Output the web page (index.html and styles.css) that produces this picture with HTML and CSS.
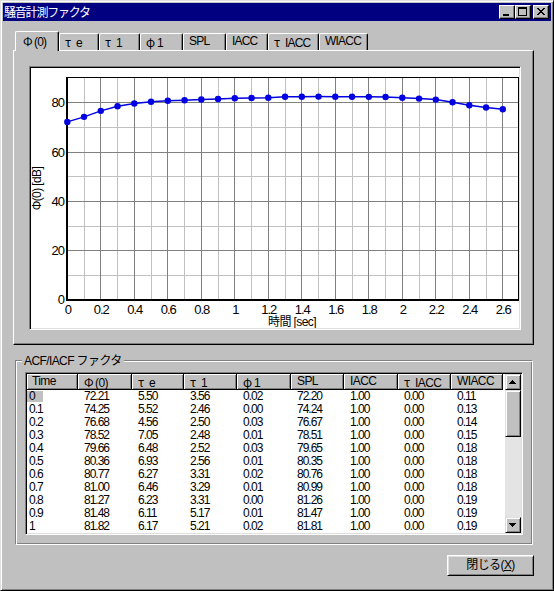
FILE: index.html
```html
<!DOCTYPE html>
<html lang="ja">
<head>
<meta charset="utf-8">
<title>騒音計測ファクタ</title>
<link rel="stylesheet" href="styles.css">
</head>
<body>
<div class="window">
  <div class="titlebar">
    <span class="title">騒音計測ファクタ</span>
    <div class="tb-buttons">
      <div class="tb-btn"><svg width="14" height="12" viewBox="0 0 14 12"><rect x="3" y="8" width="6" height="2" fill="#000"/></svg></div>
      <div class="tb-btn"><svg width="14" height="12" viewBox="0 0 14 12"><rect x="2.5" y="1.5" width="8" height="8" fill="none" stroke="#000"/><rect x="2" y="1" width="9" height="2" fill="#000"/></svg></div>
      <div class="tb-btn tb-close"><svg width="14" height="12" viewBox="0 0 14 12" shape-rendering="crispEdges"><path d="M3 2h2v1h-2zM9 2h2v1h-2zM4 3h2v1h-2zM8 3h2v1h-2zM5 4h4v1h-4zM6 5h2v1h-2zM5 6h4v1h-4zM4 7h2v1h-2zM8 7h2v1h-2zM3 8h2v1h-2zM9 8h2v1h-2z" fill="#000"/></svg></div>
    </div>
  </div>
  <div class="content">
    <div class="tabs">
      <div class="tab active t1"><span class="g">Φ</span>(0)</div>
      <div class="tab t2"><span class="g">τ</span>e</div>
      <div class="tab t3"><span class="g">τ</span>1</div>
      <div class="tab t4"><span class="g">φ</span>1</div>
      <div class="tab t5">SPL</div>
      <div class="tab t6">IACC</div>
      <div class="tab t7"><span class="g">τ</span>IACC</div>
      <div class="tab t8">WIACC</div>
    </div>
    <div class="panel">
      <div class="chart">
        <svg class="plot" width="488" height="260" viewBox="31 68 488 260">
          <rect x="31" y="68" width="488" height="260" fill="#fff"/>
          <g class="grid-minor" stroke="#c0c0c0" stroke-width="1">
            <line x1="84.5" y1="78" x2="84.5" y2="300"/>
            <line x1="117.5" y1="78" x2="117.5" y2="300"/>
            <line x1="151.5" y1="78" x2="151.5" y2="300"/>
            <line x1="184.5" y1="78" x2="184.5" y2="300"/>
            <line x1="218.5" y1="78" x2="218.5" y2="300"/>
            <line x1="251.5" y1="78" x2="251.5" y2="300"/>
            <line x1="285.5" y1="78" x2="285.5" y2="300"/>
            <line x1="318.5" y1="78" x2="318.5" y2="300"/>
            <line x1="352.5" y1="78" x2="352.5" y2="300"/>
            <line x1="385.5" y1="78" x2="385.5" y2="300"/>
            <line x1="419.5" y1="78" x2="419.5" y2="300"/>
            <line x1="452.5" y1="78" x2="452.5" y2="300"/>
            <line x1="486.5" y1="78" x2="486.5" y2="300"/>
            <line x1="67" y1="275.5" x2="518" y2="275.5"/>
            <line x1="67" y1="226.5" x2="518" y2="226.5"/>
            <line x1="67" y1="176.5" x2="518" y2="176.5"/>
            <line x1="67" y1="127.5" x2="518" y2="127.5"/>
          </g>
          <g class="grid-major" stroke="#808080" stroke-width="1">
            <line x1="100.5" y1="78" x2="100.5" y2="300"/>
            <line x1="134.5" y1="78" x2="134.5" y2="300"/>
            <line x1="167.5" y1="78" x2="167.5" y2="300"/>
            <line x1="201.5" y1="78" x2="201.5" y2="300"/>
            <line x1="234.5" y1="78" x2="234.5" y2="300"/>
            <line x1="268.5" y1="78" x2="268.5" y2="300"/>
            <line x1="301.5" y1="78" x2="301.5" y2="300"/>
            <line x1="335.5" y1="78" x2="335.5" y2="300"/>
            <line x1="368.5" y1="78" x2="368.5" y2="300"/>
            <line x1="402.5" y1="78" x2="402.5" y2="300"/>
            <line x1="435.5" y1="78" x2="435.5" y2="300"/>
            <line x1="469.5" y1="78" x2="469.5" y2="300"/>
            <line x1="502.5" y1="78" x2="502.5" y2="300"/>
            <line x1="67" y1="250.5" x2="518" y2="250.5"/>
            <line x1="67" y1="201.5" x2="518" y2="201.5"/>
            <line x1="67" y1="152.5" x2="518" y2="152.5"/>
            <line x1="67" y1="102.5" x2="518" y2="102.5"/>
          </g>
          <g stroke="#000">
            <line x1="66" y1="77.5" x2="518.5" y2="77.5" stroke-width="1"/>
            <line x1="518.5" y1="77" x2="518.5" y2="301" stroke-width="1"/>
            <line x1="67" y1="77" x2="67" y2="301" stroke-width="2"/>
            <line x1="66" y1="300" x2="519" y2="300" stroke-width="2"/>
          </g>
          <g class="ytick">
            <text x="64" y="107">80</text>
            <text x="64" y="157">60</text>
            <text x="64" y="206">40</text>
            <text x="64" y="255">20</text>
            <text x="64" y="304">0</text>
          </g>
          <g class="xtick">
            <text x="67.8" y="313.5">0</text>
            <text x="101.3" y="313.5">0.2</text>
            <text x="134.8" y="313.5">0.4</text>
            <text x="168.3" y="313.5">0.6</text>
            <text x="201.8" y="313.5">0.8</text>
            <text x="235.3" y="313.5">1</text>
            <text x="268.8" y="313.5">1.2</text>
            <text x="302.3" y="313.5">1.4</text>
            <text x="335.8" y="313.5">1.6</text>
            <text x="369.3" y="313.5">1.8</text>
            <text x="402.8" y="313.5">2</text>
            <text x="436.3" y="313.5">2.2</text>
            <text x="469.8" y="313.5">2.4</text>
            <text x="503.3" y="313.5">2.6</text>
          </g>
          <text class="axis-title" x="292" y="325.5" text-anchor="middle">時間 [sec]</text>
          <text class="axis-title" transform="translate(41 188.5) rotate(-90)" text-anchor="middle">Φ(0) [dB]</text>
          <polyline class="series" fill="none" stroke="#0000e0" stroke-width="1.5" points="67.3,121.9 84.05,116.85 100.8,110.85 117.55,106.32 134.3,103.5 151.05,101.78 167.8,100.77 184.55,100.2 201.3,99.53 218.05,99.02 234.8,98.18 251.55,97.98 268.3,97.73 285.05,96.74 301.8,96.74 318.55,96.62 335.3,96.74 352.05,96.74 368.8,96.87 385.55,97.0 402.3,97.7 419.05,98.6 435.8,99.6 452.55,102.3 469.3,105.3 486.05,107.5 502.8,109.2"/>
          <g class="pts" fill="#0000e0">
            <circle cx="67.3" cy="121.9" r="3.2"/>
            <circle cx="84.05" cy="116.85" r="3.2"/>
            <circle cx="100.8" cy="110.85" r="3.2"/>
            <circle cx="117.55" cy="106.32" r="3.2"/>
            <circle cx="134.3" cy="103.5" r="3.2"/>
            <circle cx="151.05" cy="101.78" r="3.2"/>
            <circle cx="167.8" cy="100.77" r="3.2"/>
            <circle cx="184.55" cy="100.2" r="3.2"/>
            <circle cx="201.3" cy="99.53" r="3.2"/>
            <circle cx="218.05" cy="99.02" r="3.2"/>
            <circle cx="234.8" cy="98.18" r="3.2"/>
            <circle cx="251.55" cy="97.98" r="3.2"/>
            <circle cx="268.3" cy="97.73" r="3.2"/>
            <circle cx="285.05" cy="96.74" r="3.2"/>
            <circle cx="301.8" cy="96.74" r="3.2"/>
            <circle cx="318.55" cy="96.62" r="3.2"/>
            <circle cx="335.3" cy="96.74" r="3.2"/>
            <circle cx="352.05" cy="96.74" r="3.2"/>
            <circle cx="368.8" cy="96.87" r="3.2"/>
            <circle cx="385.55" cy="97.0" r="3.2"/>
            <circle cx="402.3" cy="97.7" r="3.2"/>
            <circle cx="419.05" cy="98.6" r="3.2"/>
            <circle cx="435.8" cy="99.6" r="3.2"/>
            <circle cx="452.55" cy="102.3" r="3.2"/>
            <circle cx="469.3" cy="105.3" r="3.2"/>
            <circle cx="486.05" cy="107.5" r="3.2"/>
            <circle cx="502.8" cy="109.2" r="3.2"/>
          </g>
        </svg>
      </div>
    </div>
    <div class="group">
      <span class="group-label">ACF/IACF ファクタ</span>
      <div class="listview">
        <div class="lv-main">
          <div class="lv-head">
            <div class="hc first">Time</div>
            <div class="hc"><span class="g">Φ</span>(0)</div>
            <div class="hc"><span class="g">τ</span>e</div>
            <div class="hc"><span class="g">τ</span>1</div>
            <div class="hc"><span class="g">φ</span>1</div>
            <div class="hc">SPL</div>
            <div class="hc">IACC</div>
            <div class="hc"><span class="g">τ</span>IACC</div>
            <div class="hc">WIACC</div>
          </div>
          <div class="lv-body">
            <div class="lv-row"><div class="c first"><span class="sel">0</span></div><div class="c">72.21</div><div class="c">5.50</div><div class="c">3.56</div><div class="c">0.02</div><div class="c">72.20</div><div class="c">1.00</div><div class="c">0.00</div><div class="c">0.11</div></div>
            <div class="lv-row"><div class="c first">0.1</div><div class="c">74.25</div><div class="c">5.52</div><div class="c">2.46</div><div class="c">0.00</div><div class="c">74.24</div><div class="c">1.00</div><div class="c">0.00</div><div class="c">0.13</div></div>
            <div class="lv-row"><div class="c first">0.2</div><div class="c">76.68</div><div class="c">4.56</div><div class="c">2.50</div><div class="c">0.03</div><div class="c">76.67</div><div class="c">1.00</div><div class="c">0.00</div><div class="c">0.14</div></div>
            <div class="lv-row"><div class="c first">0.3</div><div class="c">78.52</div><div class="c">7.05</div><div class="c">2.48</div><div class="c">0.01</div><div class="c">78.51</div><div class="c">1.00</div><div class="c">0.00</div><div class="c">0.15</div></div>
            <div class="lv-row"><div class="c first">0.4</div><div class="c">79.66</div><div class="c">6.48</div><div class="c">2.52</div><div class="c">0.03</div><div class="c">79.65</div><div class="c">1.00</div><div class="c">0.00</div><div class="c">0.18</div></div>
            <div class="lv-row"><div class="c first">0.5</div><div class="c">80.36</div><div class="c">6.93</div><div class="c">2.56</div><div class="c">0.01</div><div class="c">80.35</div><div class="c">1.00</div><div class="c">0.00</div><div class="c">0.18</div></div>
            <div class="lv-row"><div class="c first">0.6</div><div class="c">80.77</div><div class="c">6.27</div><div class="c">3.31</div><div class="c">0.02</div><div class="c">80.76</div><div class="c">1.00</div><div class="c">0.00</div><div class="c">0.18</div></div>
            <div class="lv-row"><div class="c first">0.7</div><div class="c">81.00</div><div class="c">6.46</div><div class="c">3.29</div><div class="c">0.01</div><div class="c">80.99</div><div class="c">1.00</div><div class="c">0.00</div><div class="c">0.18</div></div>
            <div class="lv-row"><div class="c first">0.8</div><div class="c">81.27</div><div class="c">6.23</div><div class="c">3.31</div><div class="c">0.00</div><div class="c">81.26</div><div class="c">1.00</div><div class="c">0.00</div><div class="c">0.19</div></div>
            <div class="lv-row"><div class="c first">0.9</div><div class="c">81.48</div><div class="c">6.11</div><div class="c">5.17</div><div class="c">0.01</div><div class="c">81.47</div><div class="c">1.00</div><div class="c">0.00</div><div class="c">0.19</div></div>
            <div class="lv-row"><div class="c first">1</div><div class="c">81.82</div><div class="c">6.17</div><div class="c">5.21</div><div class="c">0.02</div><div class="c">81.81</div><div class="c">1.00</div><div class="c">0.00</div><div class="c">0.19</div></div>
          </div>
        </div>
        <div class="scrollbar">
          <div class="sb-btn"><svg width="14" height="14" viewBox="0 0 14 14" shape-rendering="crispEdges"><path d="M6 5h1v1h-1zM5 6h3v1h-3zM4 7h5v1h-5zM3 8h7v1h-7z" fill="#000"/></svg></div>
          <div class="sb-thumb"></div>
          <div class="sb-track"></div>
          <div class="sb-btn"><svg width="14" height="14" viewBox="0 0 14 14" shape-rendering="crispEdges"><path d="M3 5h7v1h-7zM4 6h5v1h-5zM5 7h3v1h-3zM6 8h1v1h-1z" fill="#000"/></svg></div>
        </div>
      </div>
    </div>
    <div class="footer">
      <div class="btn">閉じる(<u>X</u>)</div>
    </div>
  </div>
</div>
</body>
</html>
```

FILE: styles.css
```css
html, body {
  margin: 0;
  padding: 0;
  background: #c0c0c0;
}
body {
  font-family: "Liberation Sans", "Noto Sans CJK JP", sans-serif;
  font-size: 12px;
  color: #000;
}
.window {
  width: 554px;
  height: 591px;
  box-sizing: border-box;
  background: #c0c0c0;
  border: 1px solid;
  border-color: #dfdfdf #000 #000 #dfdfdf;
  box-shadow: inset 1px 1px #fff, inset -1px -1px #808080;
  padding: 2px;
}
.titlebar {
  height: 18px;
  background: #000080;
  display: flex;
  align-items: center;
  justify-content: space-between;
  padding-left: 1px;
}
.title {
  color: #fff;
  font-family: "Noto Sans CJK JP", sans-serif;
  font-size: 12px;
  line-height: 18px;
  letter-spacing: -1.2px;
}
.tb-buttons {
  display: flex;
  align-items: center;
  padding-right: 2px;
}
.tb-btn {
  width: 16px;
  height: 14px;
  box-sizing: border-box;
  background: #c0c0c0;
  border: 1px solid;
  border-color: #fff #000 #000 #fff;
  box-shadow: inset -1px -1px #808080;
  display: flex;
}
.tb-btn svg { display: block; }
.tb-close { margin-left: 2px; }

.content {
  padding-left: 10px;
  padding-top: 10px;
}
.tabs {
  display: flex;
  align-items: flex-end;
  height: 19px;
  margin-left: 2px;
}
.tab {
  height: 17px;
  box-sizing: border-box;
  border-top: 1px solid #fff;
  border-left: 1px solid #fff;
  border-right: 1px solid #000;
  border-radius: 2px 2px 0 0;
  box-shadow: inset -1px 0 #808080;
  padding-left: 5px;
  line-height: 15px;
  white-space: nowrap;
  letter-spacing: -0.8px;
}
.tab.active {
  height: 20px;
  margin-bottom: -1px;
  position: relative;
  z-index: 1;
  background: #c0c0c0;
  padding-left: 7px;
  line-height: 18px;
}
.t1 { width: 44px; }
.t2 { width: 40px; }
.t3 { width: 41px; }
.t4 { width: 43px; }
.t5 { width: 43px; }
.t6 { width: 42px; }
.t7 { width: 51px; }
.t8 { width: 49px; }

.g {
  display: inline-block;
  width: 11px;
  font-family: "Noto Sans CJK JP", sans-serif;
  font-size: 12px;
  letter-spacing: 0;
}

.panel {
  width: 521px;
  height: 295px;
  box-sizing: border-box;
  border: 1px solid;
  border-color: #fff #000 #000 #fff;
  box-shadow: inset -1px -1px #808080;
  padding: 15px 0 0 15px;
}
.chart {
  width: 492px;
  height: 264px;
  box-sizing: border-box;
  border: 1px solid;
  border-color: #808080 #fff #fff #808080;
  box-shadow: inset 1px 1px #000, inset -1px -1px #dfdfdf;
  padding: 1px;
  background: #fff;
}
.plot { display: block; }
.ytick text, .xtick text {
  font-family: "Liberation Sans", sans-serif;
  font-size: 13px;
  letter-spacing: -1px;
  fill: #000;
}
.ytick text { text-anchor: end; }
.xtick text { text-anchor: middle; }
.axis-title {
  font-family: "Liberation Sans", "Noto Sans CJK JP", sans-serif;
  font-size: 12px;
  letter-spacing: -0.6px;
  fill: #000;
}

.group {
  position: relative;
  width: 518px;
  height: 185px;
  box-sizing: border-box;
  margin: 15px 0 0 2px;
  border: 1px solid;
  border-color: #808080 #fff #fff #808080;
  box-shadow: inset 1px 1px #fff, inset -1px -1px #808080;
  padding: 11px 0 0 9px;
}
.group-label {
  position: absolute;
  left: 6px;
  top: -7px;
  background: #c0c0c0;
  padding: 0 2px;
  line-height: 14px;
  letter-spacing: -0.6px;
}
.listview {
  width: 498px;
  height: 163px;
  box-sizing: border-box;
  border: 1px solid;
  border-color: #808080 #fff #fff #808080;
  box-shadow: inset 1px 1px #000, inset -1px -1px #dfdfdf;
  padding: 1px;
  display: flex;
  background: #fff;
}
.lv-main {
  flex: 1;
  overflow: hidden;
}
.lv-head, .lv-row {
  display: grid;
  grid-template-columns: 51px 54px 52px 53px 54px 53px 54px 53px 52px;
}
.lv-head {
  height: 16px;
  background: #c0c0c0;
}
.hc {
  box-sizing: border-box;
  height: 16px;
  border-right: 1px solid #000;
  border-bottom: 1px solid #000;
  box-shadow: inset 1px 1px #fff, inset -1px -1px #808080;
  padding-left: 6px;
  line-height: 15px;
  white-space: nowrap;
  overflow: hidden;
  letter-spacing: -0.6px;
}
.hc.first { padding-left: 5px; }
.lv-body {
  background: #fff;
}
.lv-row { height: 13px; }
.c {
  padding-left: 6px;
  line-height: 13px;
  white-space: nowrap;
  letter-spacing: -1px;
}
.c.first { padding-left: 2px; }
.sel {
  display: inline-block;
  background: #c0c0c0;
  margin-left: -2px;
  padding: 0 8px 0 2px;
  line-height: 11px;
}
.scrollbar {
  width: 16px;
  margin-left: 2px;
  display: flex;
  flex-direction: column;
  background: #e4e4e4;
}
.sb-btn, .sb-thumb {
  box-sizing: border-box;
  background: #c0c0c0;
  border: 1px solid;
  border-color: #dfdfdf #000 #000 #dfdfdf;
  box-shadow: inset 1px 1px #fff, inset -1px -1px #808080;
}
.sb-btn {
  height: 16px;
  flex: none;
}
.sb-btn svg { display: block; }
.sb-thumb {
  height: 47px;
  flex: none;
}
.sb-track { flex: 1; }

.footer {
  display: flex;
  justify-content: flex-end;
  margin-top: 10px;
  padding-right: 17px;
}
.btn {
  width: 87px;
  height: 21px;
  box-sizing: border-box;
  border: 1px solid;
  border-color: #fff #000 #000 #fff;
  box-shadow: inset 1px 1px #dfdfdf, inset -1px -1px #808080;
  text-align: center;
  line-height: 19px;
  letter-spacing: -0.6px;
}
.btn u { text-decoration: underline; }
```
